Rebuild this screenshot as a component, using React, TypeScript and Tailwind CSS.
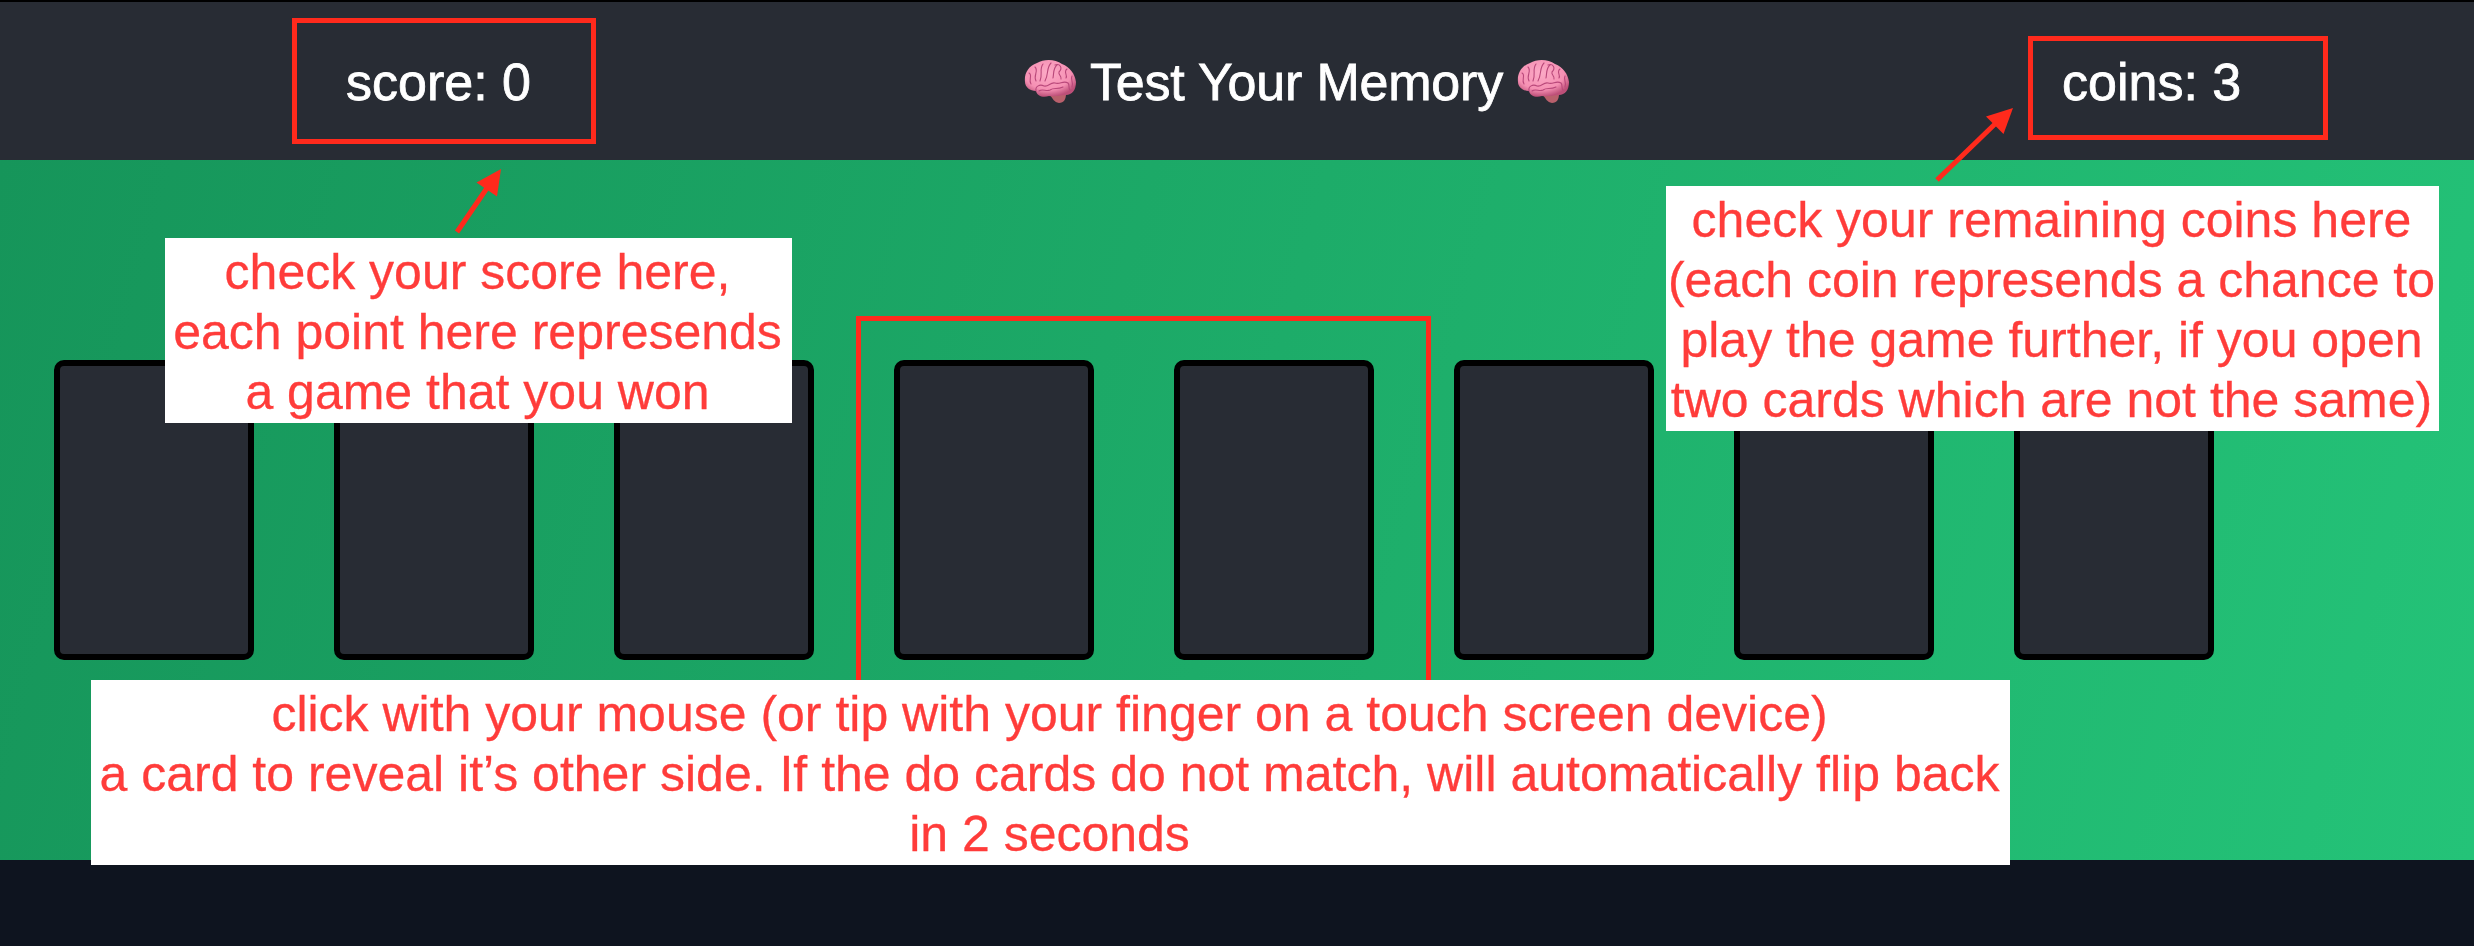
import type { ReactNode } from "react";

function Brain() {
  return (
    <svg viewBox="0 0 52 43" className="h-[43px] w-[52px] shrink-0">
      <defs>
        <radialGradient id="lobe" cx="45%" cy="35%" r="65%">
          <stop offset="0" stopColor="#fcaac6" />
          <stop offset="0.7" stopColor="#f590b3" />
          <stop offset="1" stopColor="#bd4f78" />
        </radialGradient>
      </defs>
      <path d="M26 35C30 33 38 32 42 34C42 39 40 43 35 43C30 42 29 39 26 35Z" fill="#b9606c" />
      <path d="M1 22C0 14 4 6 13 3C20 -1 31 -1 38 4C46 7 51 14 52 22C52 30 48 35 42 35C36 35 31 37 25 36C19 38 13 36 12 31C6 31 1 27 1 22Z" fill="url(#lobe)" />
      <g fill="none" stroke="#b9487a" strokeWidth="1.1" strokeLinecap="round" strokeLinejoin="round">
        <path d="M12 31C11 26 16 24 20 26C25 27 26 22 31 23C36 25 39 20 44 23C46 25 44 28 46 30" />
        <path d="M15 31C19 28 22 32 26 30C30 27 33 30 39 27" />
        <path d="M5 13C9 15 4 20 7 24" />
        <path d="M11 7C15 11 9 15 12 21" />
        <path d="M19 4C15 9 19 14 16 21" />
        <path d="M27 3C22 8 25 14 21 21" />
        <path d="M33 5C29 8 30 13 29 18" />
        <path d="M31 5C36 3 39 8 35 12C34 15 38 16 37 19" />
        <path d="M43 9C39 12 44 15 42 18" />
        <path d="M48 16C46 20 50 22 48 27" />
      </g>
    </svg>
  );
}

function Note({ className, children }: { className: string; children: ReactNode }) {
  return (
    <div className={`absolute bg-white pt-[4px] text-center text-[50px] leading-[60px] whitespace-nowrap text-[#ff3c3a] ${className}`}>
      <div className="relative -left-px [-webkit-text-stroke:0.3px_#ff3c3a]">{children}</div>
    </div>
  );
}

export default function App() {
  return (
    <div className="relative h-[946px] w-[2474px] overflow-hidden bg-[#0e141f] font-['Liberation_Sans',Arial,sans-serif]">
      <header className="flex h-40 items-center border-t-2 border-black bg-[#282c34] text-[52px] leading-none text-white [-webkit-text-stroke:0.8px_white]">
        <div className="w-[1024px] pt-0.5 pl-[346px]">score: 0</div>
        <h1 className="flex w-[1038px] items-center">
          <Brain />
          <span className="mx-[14px] pt-0.5 tracking-[-0.2px]">Test Your Memory</span>
          <Brain />
        </h1>
        <div className="pt-0.5">coins: 3</div>
      </header>
      <main className="flex h-[700px] gap-20 bg-[linear-gradient(105deg,#16955a,#24c378)] pt-[200px] pl-[54px]">
        {Array.from({ length: 8 }, (_, i) => (
          <button key={i} aria-label={`card ${i + 1}`} className="h-[300px] w-[200px] shrink-0 rounded-[10px] border-6 border-black bg-[#282c34]" />
        ))}
      </main>

      <div className="absolute top-[18px] left-[292px] h-[126px] w-[304px] border-5 border-[#ff2a1c]" />
      <div className="absolute top-[36px] left-[2028px] h-[104px] w-[300px] border-5 border-[#ff2a1c]" />
      <div className="absolute top-[316px] left-[856px] h-[400px] w-[575px] border-5 border-[#ff2a1c]" />

      <svg className="absolute top-0 left-0 h-[240px] w-[2474px]" viewBox="0 0 2474 240" fill="#ff2a1c" stroke="none">
        <path d="M457 232L487 188" stroke="#ff2a1c" strokeWidth="5" />
        <path d="M501 169L476.500 182.500L497 196.500Z" />
        <path d="M1937 180L1996 123" stroke="#ff2a1c" strokeWidth="5" />
        <path d="M2013 108L1986 116.500L2003.500 134Z" />
      </svg>

      <Note className="top-[238px] left-[165px] h-[185px] w-[627px]">
        check your score here,
        <br />
        each point here represends
        <br />a game that you won
      </Note>
      <Note className="top-[186px] left-[1666px] h-[245px] w-[773px]">
        check your remaining coins here
        <br />
        (each coin represends a chance to
        <br />
        play the game further, if you open
        <br />
        two cards which are not the same)
      </Note>
      <Note className="top-[680px] left-[91px] h-[185px] w-[1919px]">
        click with your mouse (or tip with your finger on a touch screen device)
        <br />a card to reveal it’s other side. If the do cards do not match, will automatically flip back
        <br />
        in 2 seconds
      </Note>
    </div>
  );
}
